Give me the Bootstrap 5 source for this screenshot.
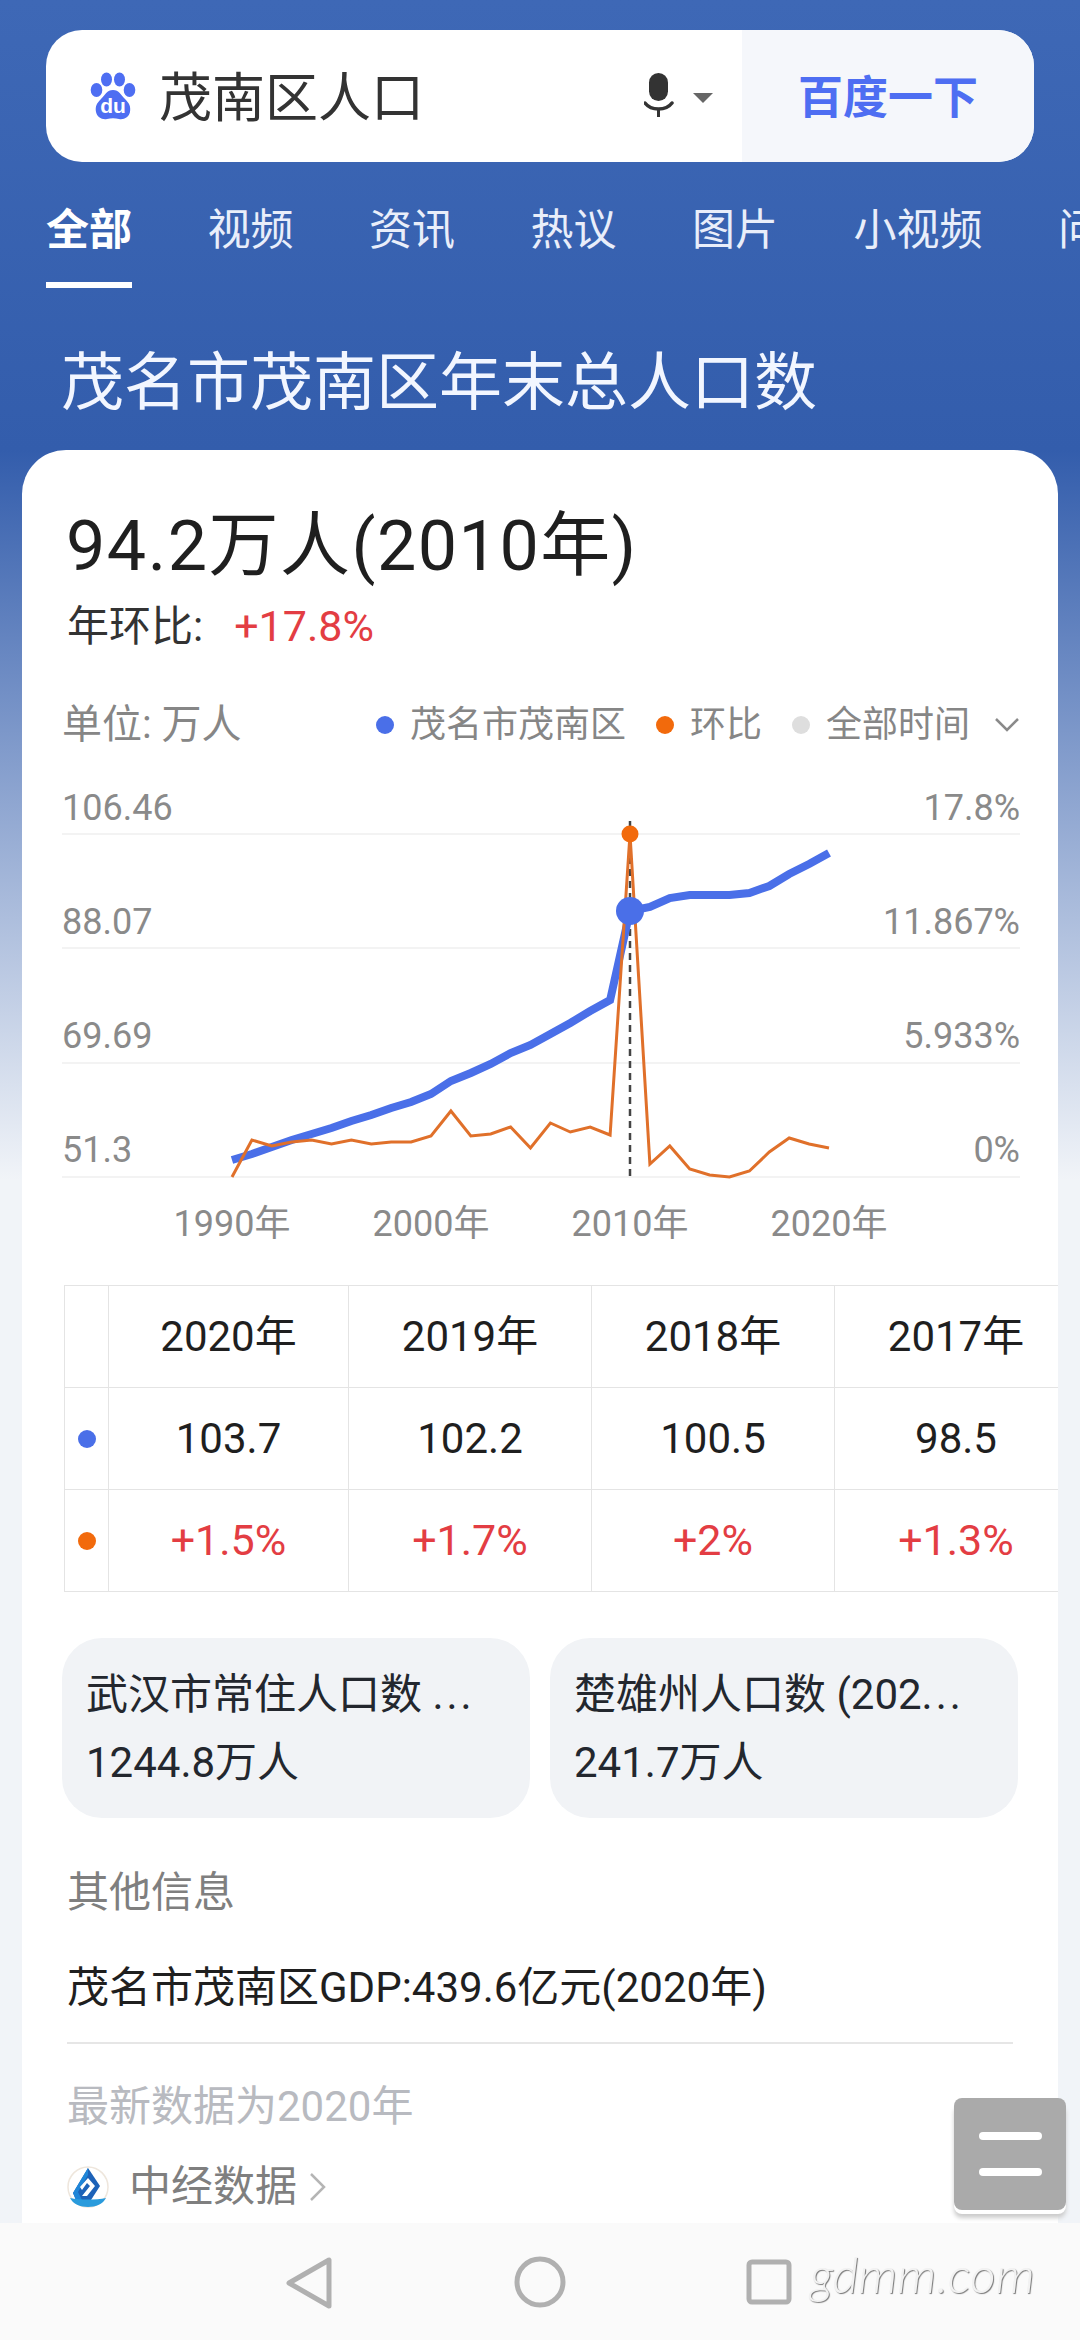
<!DOCTYPE html>
<html lang="zh-CN">
<head>
  <meta charset="UTF-8" />
  <meta name="viewport" content="width=device-width, initial-scale=1.0"/>
  <title>茂南区人口</title>
  <link href="https://cdn.jsdelivr.net/npm/bootstrap@5.3.0/dist/css/bootstrap.min.css" rel="stylesheet"/>
  <style>
    html, body { margin: 0; background: #fff; }
    body { font-family: Roboto, "Noto Sans CJK SC", sans-serif; }
    .screen { position: relative; width: 1080px; height: 2340px; overflow: hidden;
      background: linear-gradient(#3e68b6 0, #335dac 450px, #f1f4f8 1180px); }

    .searchbar { margin: 30px 46px 0; height: 132px; border-radius: 36px; overflow: hidden; background: #fff; }
    .search-main { width: 696px; padding-left: 44px; }
    .search-text { margin-left: 23px; padding-top: 6px; font-size: 53px; line-height: 1; color: #333; }
    .search-mic { margin-right: 26px; }
    .search-btn { flex: 1; padding-top: 5px; background: #f5f7fb; color: #4e6ef2; font-size: 45px; font-weight: 700; }

    .tabs { margin: 42px 0 0 46px; gap: 75.500px; white-space: nowrap; height: 90px; }
    .tab-item { font-size: 43px; line-height: 52px; color: #e9eefa; height: 78px; }
    .tab-on { font-weight: 700; color: #fff; border-bottom: 6px solid #fff; height: 84px; }

    .page-title { margin: 52px 0 0 61px; font-size: 63px; line-height: 74px; color: #f2f6ff; font-weight: 400; white-space: nowrap; }

    .main-card { position: absolute; left: 22px; top: 450px; width: 1036px; height: 1800px; background: #fff; border: 0; border-radius: 44px 44px 0 0; overflow: hidden; }
    .big-num { margin: 56px 0 0 44px; font-size: 70px; line-height: 80px; letter-spacing: 1.5px; color: #1f1f1f; white-space: nowrap; }
    .sub-line { margin: 15px 0 0 45px; font-size: 42px; line-height: 50px; color: #333; }
    .sub-red { margin-left: 31px; font-size: 43px; color: #e33d43; }

    .chart-head { margin: 48px 38px 31px 40px; height: 50px; color: #868686; font-size: 36px; }
    .unit { font-size: 40px; }
    .leg-gap { margin-left: 30px; }
    .dot { display: inline-block; width: 18px; height: 18px; border-radius: 50%; }
    .dot-blue { background: #4a6fe8; }
    .dot-orange { background: #f26a0c; }
    .dot-grey { background: #dedede; }
    .chart-svg { display: block; margin-left: 40px; }
    .chart-svg text { font-family: Roboto, "Noto Sans CJK SC", sans-serif; font-size: 36px; fill: #8a8a8a; }

    .table-clip { margin: 24px 0 0 42px; overflow: hidden; }
    .data-table { width: 1013px; margin: 0; table-layout: fixed; border-color: #e4e4e4; }
    .data-table td { height: 102px; padding: 0; text-align: center; vertical-align: middle; font-size: 42px; color: #1f1f1f; }
    .data-table td.cell-red { font-size: 43px; color: #e33d43; }
    .dot-col { width: 44px; }
    .first-col { width: 240px; }
    .val-col { width: 243px; }

    .rel-box { width: 468px; height: 180px; padding: 23px 10px 0 24px; border-radius: 40px; background: #f1f3f6; color: #23272e; font-size: 42px; line-height: 68px; }
    .rel-row { margin: 46px 0 0 40px; gap: 20px; }
    .more-dots { letter-spacing: 3px; }

    .info-head { margin: 45px 0 0 45px; font-size: 42px; line-height: 60px; color: #7f7f7f; }
    .info-line { margin: 35px 45px 0; padding-bottom: 24px; border-bottom: 2px solid #e6e6e6; font-size: 42px; line-height: 60px; color: #1f1f1f; white-space: nowrap; }
    .info-date { margin: 33px 0 0 45px; font-size: 42px; line-height: 60px; color: #b8bac0; }
    .source { margin: 25px 0 0 45px; gap: 20px; font-size: 42px; line-height: 50px; color: #7f7f7f; }
    .source-arrow { margin-left: -8px; }

    .float-btn { position: absolute; left: 954px; top: 2098px; width: 112px; height: 112px; border-radius: 8px; background: #aaa; box-shadow: 0 4px 0 #fff, 0 8px 4px #ccc; gap: 28px; }
    .float-btn span { display: block; width: 63px; height: 8px; border-radius: 4px; background: #fff; }

    .sys-bar { position: absolute; left: 0; top: 2223px; width: 1080px; height: 117px; background: #fafafa; }
    .watermark { position: absolute; left: 810px; top: 2244px; font-family: Lato, sans-serif; font-size: 50px; font-style: italic; font-weight: 300; line-height: 60px; color: #f2f2f2; text-shadow: 1px 1px 1px #777; }
  </style>
</head>
<body>
<div class="screen">

  <div class="searchbar d-flex">
    <div class="search-main d-flex align-items-center">
      <svg width="46" height="48" viewBox="0 0 46 48">
        <ellipse cx="6.500" cy="18" rx="5.800" ry="7" fill="#4e6ef2"/>
        <ellipse cx="16.500" cy="7.500" rx="5.500" ry="7" fill="#4e6ef2"/>
        <ellipse cx="29.500" cy="7.500" rx="5.500" ry="7" fill="#4e6ef2"/>
        <ellipse cx="39.500" cy="18" rx="5.800" ry="7" fill="#4e6ef2"/>
        <path d="M23 18c6 0 8 5 12 9 4 4 6 7 5 13-1 5-6 8-11 7-4-1-8-1-12 0-5 1-10-2-11-7-1-6 1-9 5-13 4-4 6-9 12-9z" fill="#4e6ef2"/>
        <text x="23" y="41" text-anchor="middle" font-family="Liberation Sans, sans-serif" font-size="21" font-weight="700" fill="#fff">du</text>
      </svg>
      <div class="search-text">茂南区人口</div>
      <svg class="ms-auto search-mic" width="72" height="46" viewBox="0 0 72 46">
        <rect x="5" y="0" width="19" height="28" rx="9.500" fill="#333"/>
        <path d="M1 30c3 4 8 6 13.500 6S25 34 28 30" fill="none" stroke="#333" stroke-width="3.500" stroke-linecap="round"/>
        <rect x="13" y="35" width="3" height="9" fill="#333"/>
        <path d="M49 20h20l-10 10z" fill="#666"/>
      </svg>
    </div>
    <div class="search-btn d-flex align-items-center justify-content-center">百度一下</div>
  </div>

  <div class="tabs d-flex">
    <div class="tab-item tab-on">全部</div>
    <div class="tab-item">视频</div>
    <div class="tab-item">资讯</div>
    <div class="tab-item">热议</div>
    <div class="tab-item">图片</div>
    <div class="tab-item">小视频</div>
    <div class="tab-item">问答</div>
  </div>

  <h1 class="page-title">茂名市茂南区年末总人口数</h1>

  <div class="card main-card">
    <div class="big-num">94.2万人(2010年)</div>
    <div class="sub-line">年环比:<span class="sub-red">+17.8%</span></div>

    <div class="chart-head d-flex align-items-center">
      <span class="unit">单位: 万人</span>
      <span class="dot dot-blue ms-auto"></span><span class="ms-3">茂名市茂南区</span>
      <span class="dot dot-orange leg-gap"></span><span class="ms-3">环比</span>
      <span class="dot dot-grey leg-gap"></span><span class="ms-3">全部时间</span>
      <svg class="ms-4" width="26" height="16" viewBox="0 0 26 16"><path d="M2 2l11 11L24 2" fill="none" stroke="#8a8a8a" stroke-width="2.500"/></svg>
    </div>

    <svg id="chart" class="chart-svg" width="960" height="480" viewBox="62 780 960 480"></svg>

    <div class="table-clip">
      <table class="table table-bordered data-table">
        <colgroup><col class="dot-col"/><col class="first-col"/><col class="val-col"/><col class="val-col"/><col class="val-col"/></colgroup>
        <tr><td></td><td>2020年</td><td>2019年</td><td>2018年</td><td>2017年</td></tr>
        <tr><td><span class="dot dot-blue d-block mx-auto"></span></td><td>103.7</td><td>102.2</td><td>100.5</td><td>98.5</td></tr>
        <tr><td><span class="dot dot-orange d-block mx-auto"></span></td><td class="cell-red">+1.5%</td><td class="cell-red">+1.7%</td><td class="cell-red">+2%</td><td class="cell-red">+1.3%</td></tr>
      </table>
    </div>

    <div class="rel-row d-flex">
      <div class="rel-box"><div class="text-nowrap">武汉市常住人口数 <span class="more-dots">...</span></div><div>1244.8万人</div></div>
      <div class="rel-box"><div class="text-nowrap">楚雄州人口数 (202<span class="more-dots">...</span></div><div>241.7万人</div></div>
    </div>

    <div class="info-head">其他信息</div>
    <div class="info-line">茂名市茂南区GDP:439.6亿元(2020年)</div>
    <div class="info-date">最新数据为2020年</div>
    <div class="source d-flex align-items-center">
      <svg width="42" height="42" viewBox="0 0 42 42">
        <circle cx="21" cy="21" r="20" fill="#fff" stroke="#eee6dc" stroke-width="1.500"/>
        <path d="M21 2L33 20 24 34H9L6 27z" fill="#1d62b8"/>
        <path d="M21 2L6 27l3 7h6l-4-8L21 9z" fill="#1f86d8"/>
        <path d="M21 12l7 8-8 10h-5l8-10-3-3-5 7-2-3z" fill="#fff"/>
        <path d="M3 32c10 2 26 2 36 0-3 6-10 9-18 9S6 38 3 32z" fill="#2a9bdc"/>
      </svg>
      <span>中经数据</span>
      <svg class="source-arrow" width="18" height="32" viewBox="0 0 18 32"><path d="M2 3l13 13L2 29" fill="none" stroke="#b5b5b5" stroke-width="2.500"/></svg>
    </div>
  </div>

  <div class="float-btn d-flex flex-column align-items-center justify-content-center"><span></span><span></span></div>

  <div class="sys-bar">
    <svg width="1080" height="117" viewBox="0 2223 1080 117">
      <path d="M329 2260v46l-40-23z" fill="none" stroke="#b0b0b0" stroke-width="5" stroke-linejoin="round"/>
      <ellipse cx="540" cy="2282" rx="23" ry="23" fill="none" stroke="#b0b0b0" stroke-width="5"/>
      <rect x="749" y="2262" width="40" height="40" rx="3" fill="none" stroke="#b0b0b0" stroke-width="5"/>
    </svg>
  </div>
  <div class="watermark">gdmm.com</div>
</div>

<script>
  // y values read off the curve, one per year from 1990 to 2020
  const blue = [1159,1153,1146,1139,1133,1127,1120,1114,1107,1101,1093,1080,1072,1063,1052,1044,1033,1022,1010,999,910,906,897,894,894,894,892,885,873,863,852];
  const orange = [1176,1139,1145,1141,1139,1143,1139,1143,1141,1141,1135,1110,1135,1133,1126,1147,1122,1131,1126,1134,833,1163,1145,1168,1174,1176,1170,1151,1137,1143,1147];
  const line = (ys) => ys.map((y, i) => (232 + i * 19.9).toFixed(1) + "," + y).join(" ");

  let html = "";
  [833, 947, 1062, 1176].forEach((y) => {
    html += `<line x1="62" x2="1020" y1="${y}" y2="${y}" stroke="#f3f3f3" stroke-width="2"/>`;
  });
  [["106.46","17.8%",806],["88.07","11.867%",920],["69.69","5.933%",1034],["51.3","0%",1148]].forEach((r) => {
    html += `<text x="62" y="${r[2] + 13}">${r[0]}</text><text x="1020" y="${r[2] + 13}" text-anchor="end">${r[1]}</text>`;
  });
  [["1990年",232],["2000年",431],["2010年",630],["2020年",829]].forEach((r) => {
    html += `<text x="${r[1]}" y="1235" text-anchor="middle">${r[0]}</text>`;
  });
  html += `<line x1="630" x2="630" y1="820" y2="1176" stroke="#444" stroke-width="2.500" stroke-dasharray="7 5"/>`;
  html += `<polyline points="${line(blue)}" fill="none" stroke="#4a6fe8" stroke-width="8"/>`;
  html += `<polyline points="${line(orange)}" fill="none" stroke="#e0702a" stroke-width="3"/>`;
  html += `<circle cx="630" cy="910" r="14" fill="#4a6fe8"/><circle cx="630" cy="833" r="8.500" fill="#f26a0c"/>`;
  document.getElementById("chart").innerHTML = html;
</script>
<script src="https://cdn.jsdelivr.net/npm/bootstrap@5.3.0/dist/js/bootstrap.bundle.min.js"></script>
</body>
</html>
